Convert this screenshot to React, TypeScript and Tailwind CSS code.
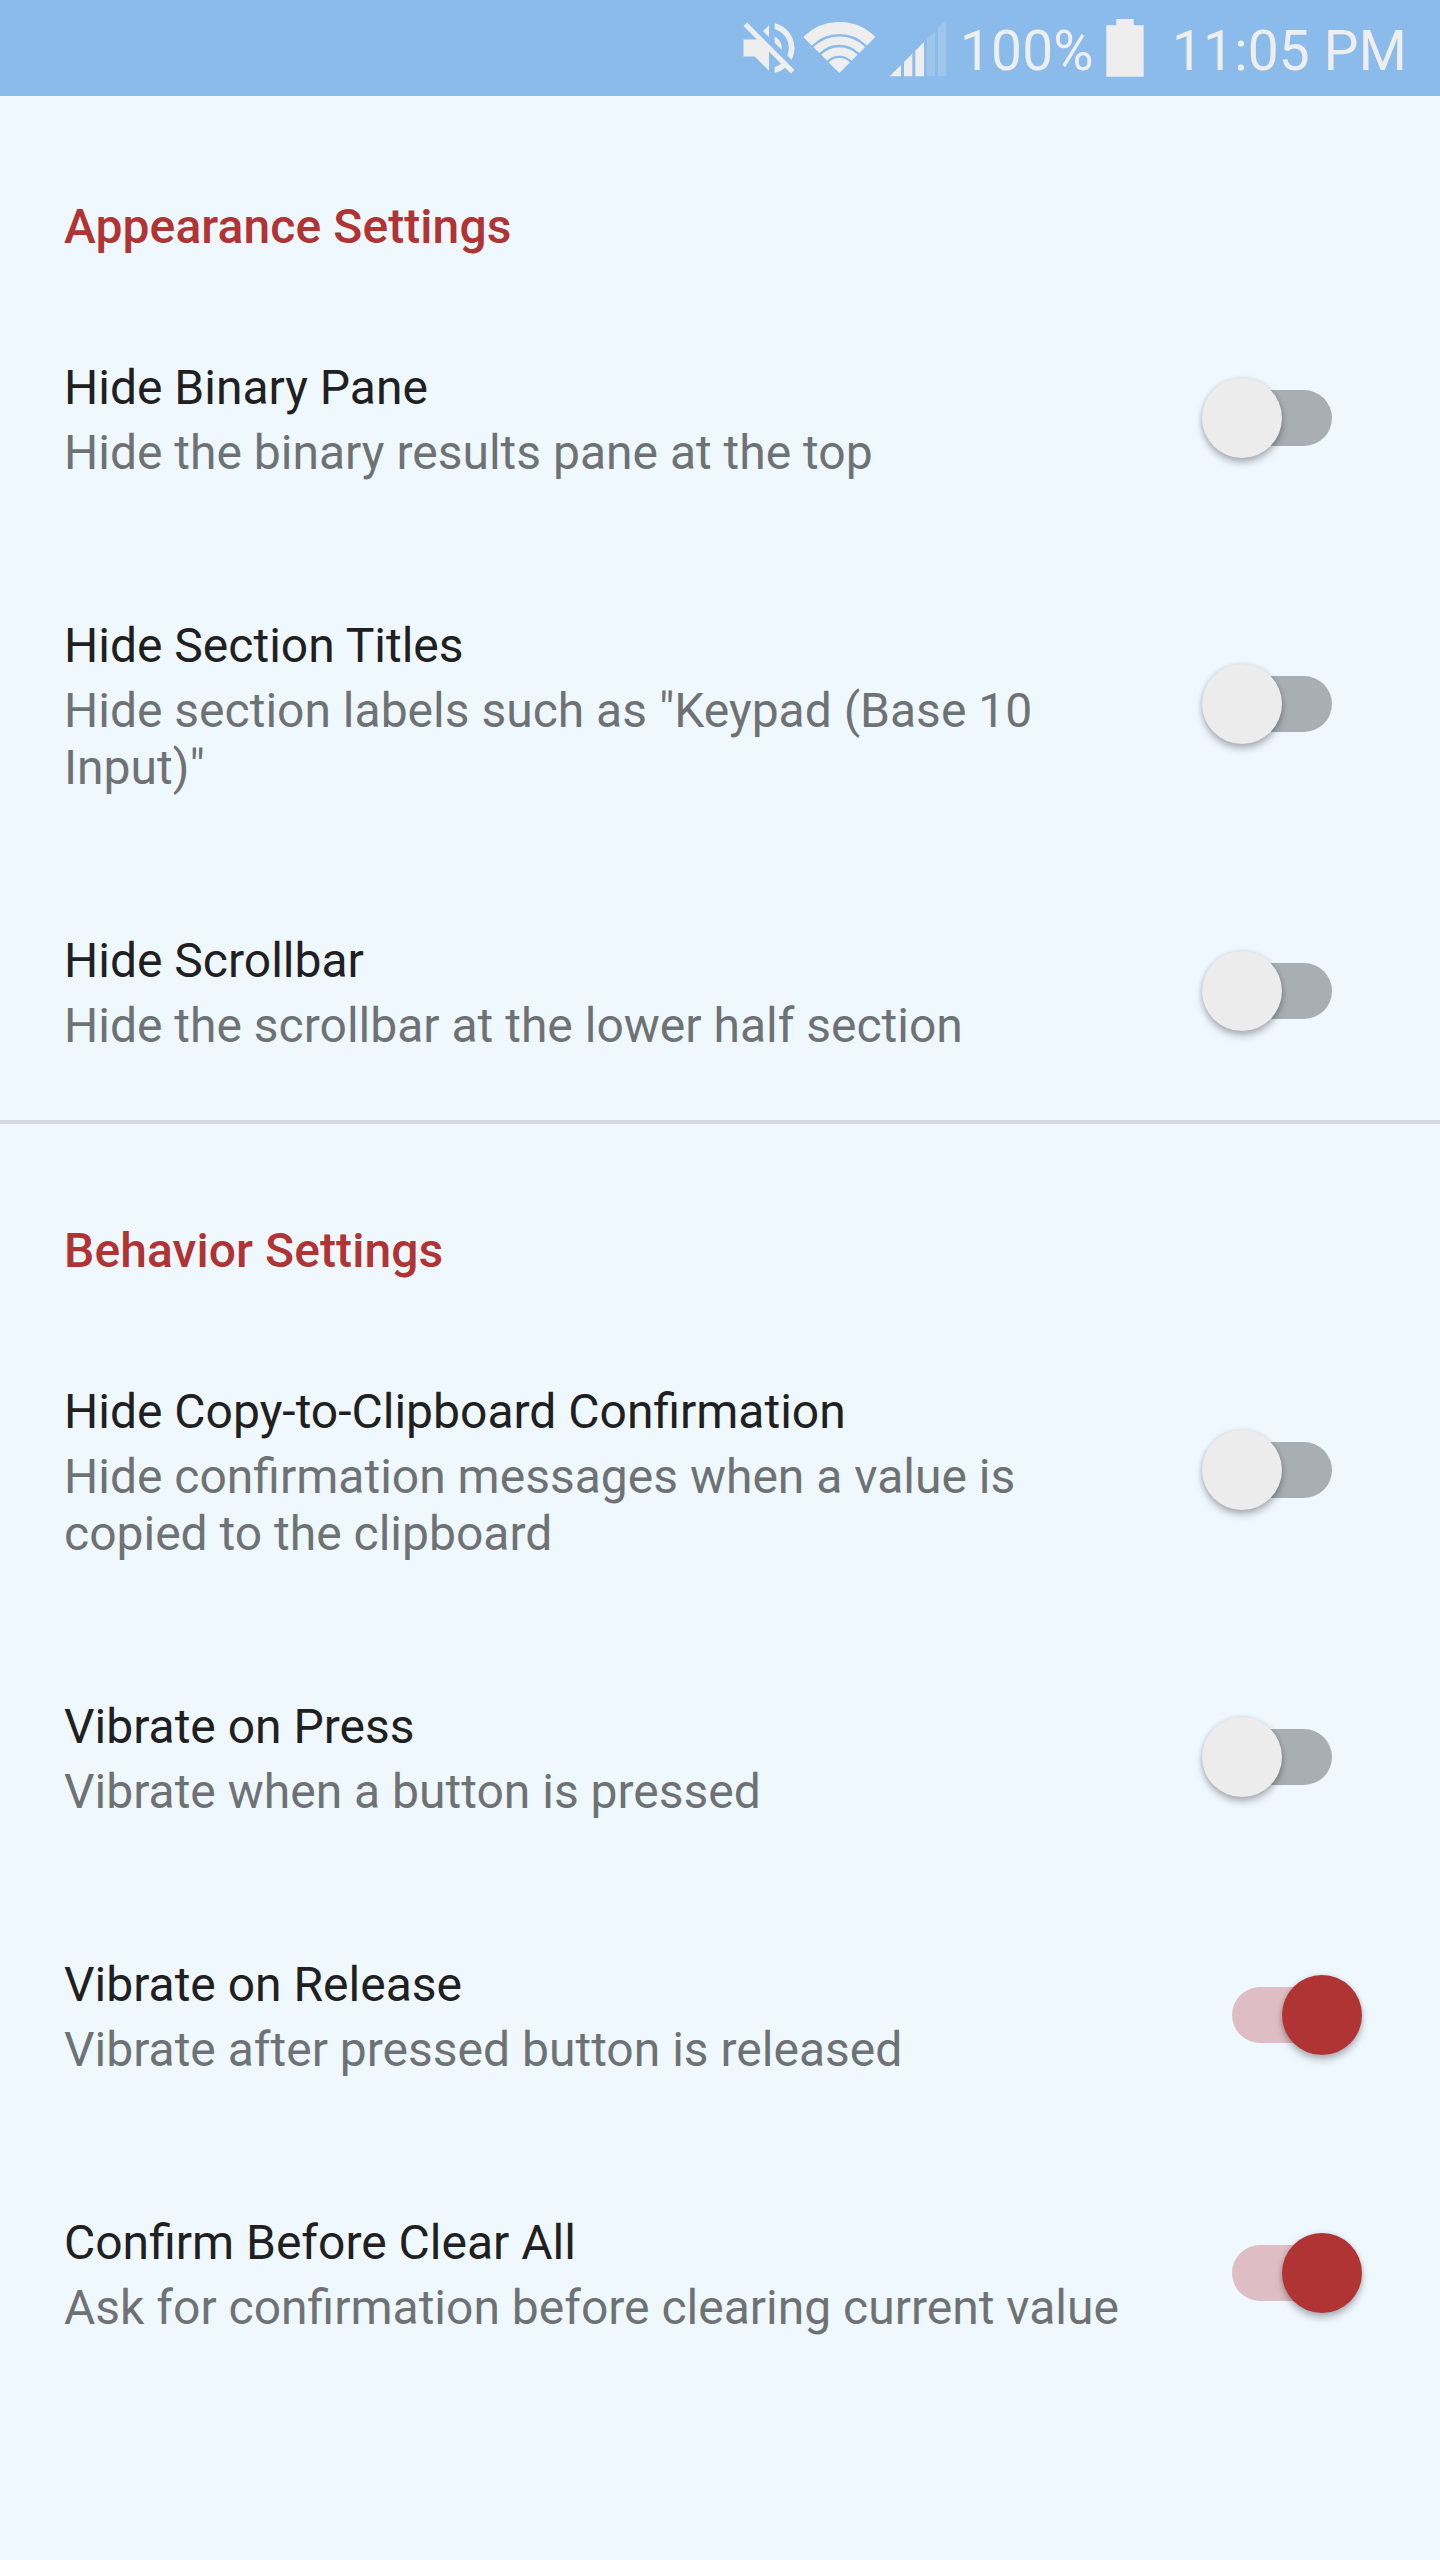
import React from 'react';

type Setting = { title: string; summary: string; on?: boolean };
type Section = { title: string; settings: Setting[] };

const SECTIONS: Section[] = [
  {
    title: 'Appearance Settings',
    settings: [
      { title: 'Hide Binary Pane', summary: 'Hide the binary results pane at the top' },
      { title: 'Hide Section Titles', summary: 'Hide section labels such as "Keypad (Base 10 Input)"' },
      { title: 'Hide Scrollbar', summary: 'Hide the scrollbar at the lower half section' },
    ],
  },
  {
    title: 'Behavior Settings',
    settings: [
      {
        title: 'Hide Copy-to-Clipboard Confirmation',
        summary: 'Hide confirmation messages when a value is copied to the clipboard',
      },
      { title: 'Vibrate on Press', summary: 'Vibrate when a button is pressed' },
      { title: 'Vibrate on Release', summary: 'Vibrate after pressed button is released', on: true },
      { title: 'Confirm Before Clear All', summary: 'Ask for confirmation before clearing current value', on: true },
    ],
  },
];

function MutedIcon() {
  return (
    <svg className="mt-[14px] h-[68px] w-[68px] shrink-0" viewBox="0 0 24 24" fill="currentColor">
      <path d="M16.5 12c0-1.77-1.02-3.29-2.5-4.03v2.21l2.45 2.45c.03-.2.05-.41.05-.63zm2.5 0c0 .94-.2 1.82-.54 2.64l1.51 1.51C20.63 14.91 21 13.5 21 12c0-4.28-2.99-7.86-7-8.77v2.06c2.89.86 5 3.54 5 6.71zM4.27 3L3 4.27 7.73 9H3v6h4l5 5v-6.73l4.25 4.25c-.67.52-1.42.93-2.25 1.18v2.06c1.38-.31 2.63-.95 3.69-1.81L19.73 21 21 19.73l-9-9L4.27 3zM12 4L9.91 6.09 12 8.18V4z" />
    </svg>
  );
}

function WifiIcon() {
  return (
    <svg className="ml-px mt-[22px] h-[51px] w-[71px] shrink-0" viewBox="222 66 213 153" fill="none" stroke="currentColor">
      <path d="M232.5 123.5A135 135 0 0 1 423.5 123.5" strokeWidth="36" />
      <path d="M259.4 150.4A97 97 0 0 1 396.6 150.4" strokeWidth="25" />
      <path d="M282.4 173.4A64.5 64.5 0 0 1 373.6 173.4" strokeWidth="25" />
      <path d="M328 219L296.2 187.2A45 45 0 0 1 359.8 187.2Z" fill="currentColor" stroke="none" />
    </svg>
  );
}

function SignalIcon() {
  return (
    <svg className="ml-[14px] mt-[19px] h-[58px] w-[58px] shrink-0" viewBox="477 57 174 174" fill="currentColor">
      <path d="M479 229L513 195V229ZM522 186L547 161V229H522ZM556 152L582 126V229H556Z" />
      <path opacity=".22" d="M590 118L615 93V229H590ZM624 84L649 59V229H624Z" />
    </svg>
  );
}

function BatteryIcon() {
  return (
    <svg className="mt-[19px] h-[58px] w-[38px] shrink-0" viewBox="468 57 114 174" fill="currentColor">
      <path d="M499 57H551V75.5H581V230H469V75.5H499Z" />
    </svg>
  );
}

function StatusBar() {
  return (
    <header className="flex h-[96px] items-start bg-[#8abbea] pl-[735px] text-[55px] leading-[66px] tracking-[0.2px] text-[#eeeeee]">
      <MutedIcon />
      <WifiIcon />
      <SignalIcon />
      <span className="ml-[13px] mt-[18px] w-[146px] whitespace-nowrap">100%</span>
      <BatteryIcon />
      <span className="ml-[28px] mt-[18px] whitespace-nowrap">11:05 PM</span>
    </header>
  );
}

function Toggle({ on }: { on?: boolean }) {
  return (
    <div role="switch" aria-checked={!!on} className={`relative -mt-px flex h-[80px] w-[160px] shrink-0 items-center ${on ? 'pl-[30px]' : 'pl-[10px]'}`}>
      <div className={`h-[56px] w-[120px] rounded-full ${on ? 'bg-[#dfbdc4]' : 'bg-[#a8aeb2]'}`} />
      <div
        className={`absolute top-0 h-[80px] w-[80px] rounded-full shadow-[0_5px_7px_rgba(0,0,0,0.26),0_0_5px_rgba(0,0,0,0.12)] ${
          on ? 'left-[80px] bg-[#b03434]' : 'left-0 bg-[#ececec]'
        }`}
      />
    </div>
  );
}

function SettingRow({ title, summary, on }: Setting) {
  return (
    <div className="flex items-center justify-between pl-[64px] pr-[78px]">
      <div className="w-[1074px] pb-[66px] pt-[70px]">
        <div className="text-[#1f2021]">{title}</div>
        <div className="mt-2 text-[#6e7275]">{summary}</div>
      </div>
      <Toggle on={on} />
    </div>
  );
}

export default function App() {
  return (
    <div className="min-h-[2560px] w-[1440px] bg-[#f0f8ff] font-['Roboto',sans-serif]">
      <StatusBar />
      <main className="text-[48px] leading-[57px]">
        {SECTIONS.map((section, i) => (
          <section key={section.title}>
            <h2
              className={`h-[193px] px-[64px] font-medium tracking-[0.08px] text-[#b03434] ${
                i > 0 ? 'border-t-4 border-[#d3dae2] pt-[98px]' : 'pt-[102px]'
              }`}
            >
              {section.title}
            </h2>
            {section.settings.map((s) => (
              <SettingRow key={s.title} {...s} />
            ))}
          </section>
        ))}
      </main>
    </div>
  );
}
